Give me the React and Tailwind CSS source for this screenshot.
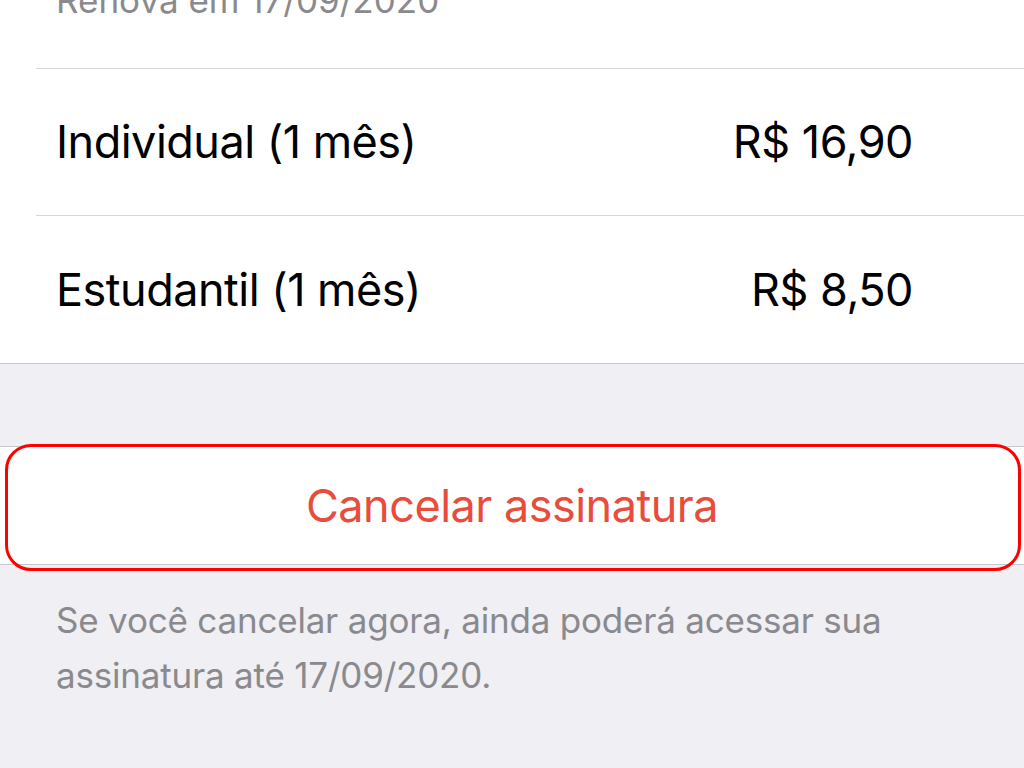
const plans = [
  { name: 'Individual (1 mês)', price: 'R$ 16,90' },
  { name: 'Estudantil (1 mês)', price: 'R$ 8,50' },
];

export default function App() {
  return (
    <div
      className="w-[1024px] h-[768px] overflow-hidden bg-[#efeff4]"
      style={{ fontFamily: 'Inter, "Liberation Sans", sans-serif' }}
    >
      {/* Options list */}
      <div className="bg-white border-b border-[#c8c7cc]">
        <div className="ml-[36px]">
          <div className="h-[69px] border-b border-[#d6d6da] pl-[20px] overflow-hidden">
            <p className="text-[35px] leading-none text-[#8a8a8e] -mt-[17px]">Renova em 17/09/2020</p>
          </div>
          {plans.map((plan, i) => (
            <div
              key={i}
              className={`h-[147px] flex items-center justify-between pl-[20px] pr-[111px] ${
                i === 0 ? 'border-b border-[#d6d6da]' : ''
              }`}
            >
              <span className="text-[45px] text-black tracking-[-0.5px]">{plan.name}</span>
              <span className="text-[45px] text-black tracking-[-0.5px]">{plan.price}</span>
            </div>
          ))}
        </div>
      </div>

      <div className="h-[83px] border-b border-[#c8c7cc]"></div>

      {/* Cancel button */}
      <div className="relative">
        <button className="w-full h-[118px] bg-white border-b border-[#c8c7cc] flex items-center justify-center text-[45px] text-[#e84c3d] tracking-[-0.5px]">
          Cancelar assinatura
        </button>
        <div className="absolute left-[5px] right-[3px] -top-[3px] -bottom-[6px] border-[3px] border-[#f00] rounded-[26px] pointer-events-none"></div>
      </div>

      <p className="pl-[56px] pr-[40px] pt-[28px] text-[35px] leading-[55px] tracking-[-0.2px] text-[#8a8a8e]">
        Se você cancelar agora, ainda poderá acessar sua assinatura até 17/09/2020.
      </p>
    </div>
  );
}
